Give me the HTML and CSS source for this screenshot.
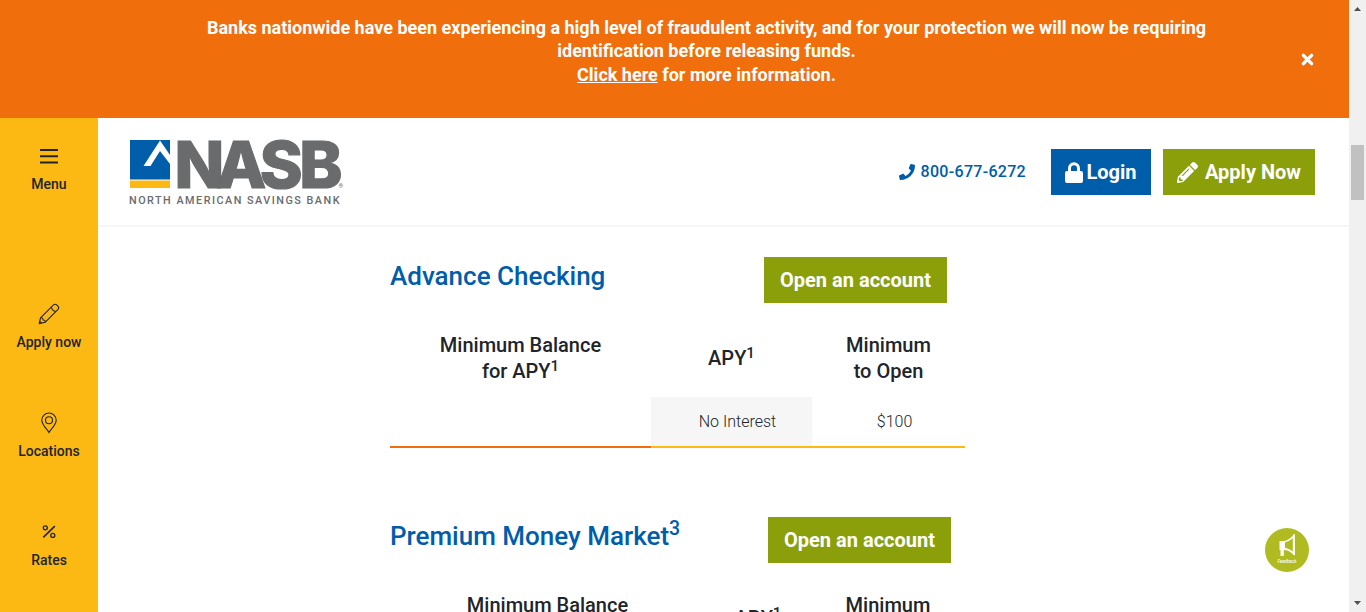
FILE: index.html
```html
<!DOCTYPE html>
<html lang="en">
<head>
<meta charset="utf-8">
<title>NASB Checking Accounts</title>
<link rel="stylesheet" href="styles.css">
</head>
<body>
<div class="viewport">
  <div class="page">
    <div class="alert">
      <p class="alert-text">Banks nationwide have been experiencing a high level of fraudulent activity, and for your protection we will now be requiring<br>identification before releasing funds.<br><a class="alert-link" href="#">Click here</a> for more information.</p>
      <svg class="alert-close" viewBox="0 0 12 12" aria-label="Close"><path d="M2.2 2.2 9.8 9.8M9.8 2.2 2.2 9.8" stroke="#fff" stroke-width="3.1" stroke-linecap="round"/></svg>
    </div>
    <div class="body">
      <nav class="side">
        <a class="side-item side-menu" href="#">
          <svg class="side-icon" viewBox="0 0 22 22"><path d="M2 5h18M2 11.2h18M2 17.4h18" stroke="#212529" stroke-width="2" fill="none"/></svg>
          <span>Menu</span>
        </a>
        <a class="side-item side-apply" href="#">
          <svg class="side-icon" viewBox="0 0 22 22"><g stroke="#212529" stroke-width="1.1" fill="none" stroke-linejoin="round"><path d="M1.2 20.6 2.5 14.8 15.5 1.9Q17.2.4 19 2.2L19.9 3.1Q21.5 4.8 20 6.4L7.1 19.3Z"/><path d="M2.6 14.8Q5 14.4 5 17Q7.600 16.800 7.100 19.200M13.400 4Q14 7.900 17.900 8.500M1.700 18.200 3.600 20.100"/></g></svg>
          <span>Apply now</span>
        </a>
        <a class="side-item side-locations" href="#">
          <svg class="side-icon" viewBox="0 0 22 22"><g stroke="#212529" stroke-width="1.1" fill="none"><path d="M11 20.600C9.500 17.500 3.800 12.900 3.800 8.200A7.200 7.200 0 0 1 18.200 8.200C18.200 12.900 12.500 17.500 11 20.600Z"/><circle cx="11" cy="8.200" r="3.500"/></g></svg>
          <span>Locations</span>
        </a>
        <a class="side-item side-rates" href="#">
          <svg class="side-icon" viewBox="0 0 22 22"><g stroke="#212529" stroke-width="1.300" fill="none"><circle cx="7.300" cy="6.800" r="2"/><circle cx="14.800" cy="14.400" r="2"/><path d="M5.300 16.400 16.800 5.100" stroke-width="1.600"/></g></svg>
          <span>Rates</span>
        </a>
      </nav>
      <main class="main">
        <header class="header">
          <svg class="logo" viewBox="0 0 216 70" role="img" aria-label="NASB North American Savings Bank">
            <rect x="1" y="2" width="40" height="39.500" fill="#005daa"/>
            <rect x="1" y="42.500" width="40" height="7.500" fill="#fdb913"/>
            <path d="M14.500 28 31 2.500 41 17V26L31 13 21.500 28Z" fill="#fff"/>
            <text class="logo-name" y="49.500" x="45.500 87.300 130.800 170.300">NASB</text>
            <text class="logo-reg" x="209.500" y="50">®</text>
            <text class="logo-tag" x="0" y="66" textLength="210.500">NORTH AMERICAN SAVINGS BANK</text>
          </svg>
          <div class="actions">
            <a class="phone" href="#"><svg class="phone-icon" viewBox="0 0 512 512"><path fill="#005daa" d="M493.400 24.600l-104-24c-11.300-2.600-22.900 3.300-27.500 13.900l-48 112c-4.200 9.800-1.400 21.300 6.900 28l60.600 49.600c-36 76.700-98.900 140.500-177.200 177.200l-49.600-60.600c-6.800-8.300-18.200-11.100-28-6.900l-112 48C3.900 366.500-2 378.100.6 389.400l24 104C27.100 504.200 36.700 512 48 512c256.100 0 464-207.500 464-464 0-11.200-7.700-20.900-18.600-23.400z"/></svg>800-677-6272</a>
            <a class="btn btn-login" href="#"><svg class="lock-icon" viewBox="0 0 18 21"><path d="M4.500 10V6.200A4.500 4.500 0 0 1 13.500 6.200V10" stroke="#fff" stroke-width="3" fill="none"/><rect y="9" width="18" height="12" rx="2" fill="#fff"/></svg>Login</a>
            <a class="btn btn-apply" href="#"><svg class="pen-icon" viewBox="0 0 512 512"><path fill="#fff" d="M497.900 142.100l-46.100 46.100c-4.700 4.700-12.300 4.700-17 0l-111-111c-4.700-4.700-4.700-12.300 0-17l46.100-46.100c18.700-18.700 49.100-18.700 67.900 0l60.100 60.100c18.800 18.700 18.800 49.100 0 67.900zM284.200 99.800L21.600 362.400.4 483.900c-2.900 16.400 11.400 30.600 27.800 27.800l121.500-21.300 262.600-262.600c4.700-4.700 4.700-12.300 0-17l-111-111c-4.800-4.700-12.400-4.700-17.100 0zM124.100 339.900c-5.500-5.500-5.500-14.300 0-19.800l154-154c5.500-5.500 14.300-5.500 19.800 0s5.500 14.300 0 19.800l-154 154c-5.500 5.500-14.300 5.500-19.800 0zM88 424h48v36.300l-64.500 11.300-31.100-31.100L51.700 376H88v48z"/></svg>Apply Now</a>
          </div>
        </header>
        <section class="product">
          <div class="product-head">
            <h2 class="product-title">Advance Checking</h2>
            <a class="btn btn-open" href="#">Open an account</a>
          </div>
          <table class="rates">
            <colgroup><col class="c-balance"><col class="c-apy"><col class="c-open"></colgroup>
            <tr><th>Minimum Balance<br>for APY<sup>1</sup></th><th>APY<sup>1</sup></th><th>Minimum<br>to Open</th></tr>
            <tr class="rate-row"><td class="tier"></td><td class="shade">No Interest</td><td>$100</td></tr>
          </table>
        </section>
        <section class="product">
          <div class="product-head product-head-market">
            <h2 class="product-title">Premium Money Market<sup>3</sup></h2>
            <a class="btn btn-open" href="#">Open an account</a>
          </div>
          <table class="rates">
            <colgroup><col class="m-balance"><col class="m-apy"><col class="m-open"></colgroup>
            <tr><th>Minimum Balance<br>for APY<sup>1</sup></th><th>APY<sup>1</sup></th><th>Minimum<br>to Open</th></tr>
          </table>
        </section>
      </main>
    </div>
  </div>
  <div class="scrollbar">
    <svg class="scroll-arrow" viewBox="0 0 7 4"><path d="M0 4 3.500 0 7 4Z" fill="#505050"/></svg>
    <div class="thumb"></div>
    <svg class="scroll-arrow scroll-down" viewBox="0 0 7 4"><path d="M0 0 3.500 4 7 0Z" fill="#505050"/></svg>
  </div>
  <a class="feedback" href="#">
    <svg class="feedback-icon" viewBox="0 0 44 44"><path d="M14.500 13H20V22H18.800V28H15.500V22H14.500Z" fill="#fff"/><path d="M19 13.800Q24 13 28.800 8V25.500Q24 21 19 21" fill="none" stroke="#fff" stroke-width="1.800"/><path d="M28.800 6.500V27" stroke="#fff" stroke-width="1.800"/><text class="feedback-label" x="22" y="35" text-anchor="middle" textLength="19">Feedback</text></svg>
  </a>
</div>
</body>
</html>
```
FILE: styles.css
```css
* { box-sizing: border-box; }
body { margin: 0; font-family: Roboto, "Liberation Sans", sans-serif; font-size: 16px; color: #212529; background: #fff; overflow: hidden; }
a { text-decoration: none; color: inherit; }
svg { display: block; flex: none; }
.viewport { display: grid; grid-template-columns: 1fr 17px; height: 612px; overflow: hidden; }
.page { display: flex; flex-direction: column; height: 612px; overflow: hidden; }

.alert { display: flex; align-items: center; flex: none; height: 118px; padding: 0 35px 0 112px; background: #f06e0c; color: #fff; }
.alert-text { flex: 1; margin: -16px 0 0; text-align: center; font-size: 18px; font-weight: 700; line-height: 23.4px; white-space: nowrap; }
.alert-link { text-decoration: underline; }
.alert-close { width: 13px; height: 13px; }

.body { display: flex; flex: 1; min-height: 0; }
.side { flex: none; width: 98px; padding-top: 27px; background: #fdb913; }
.side-item { display: flex; flex-direction: column; align-items: center; gap: 8px; height: 109px; font-size: 14px; font-weight: 500; line-height: 18px; }
.side-menu { height: 158px; }
.side-icon { width: 22px; height: 22px; }

.main { flex: 1; min-width: 0; }
.header { display: flex; justify-content: space-between; height: 109px; padding: 20px 34px 0 31px; border-bottom: 2px solid #f6f6f6; }
.logo { width: 216px; height: 70px; }
.logo-name { font-family: Inter, sans-serif; font-weight: 800; font-size: 65px; fill: #6a6b6d; stroke: #6a6b6d; stroke-width: 1.2px; }
.logo-reg { font-size: 6px; fill: #6a6b6d; }
.logo-tag { font-size: 10.800px; font-weight: 500; fill: #6a6b6d; }
.actions { display: flex; padding-top: 11px; }
.phone { display: flex; align-items: center; height: 45px; margin-right: 25px; gap: 6px; color: #005daa; font-weight: 500; letter-spacing: .3px; }
.phone-icon { width: 16px; height: 16px; }
.btn { display: flex; align-items: center; justify-content: center; height: 46px; color: #fff; background: #8a9f0a; font-size: 20px; font-weight: 700; white-space: nowrap; }
.btn-login { width: 100px; margin-right: 12px; gap: 3px; background: #005daa; }
.lock-icon { width: 18px; height: 21px; }
.btn-apply { width: 152px; gap: 7px; }
.pen-icon { width: 21px; height: 21px; }

.product { width: 575px; margin-left: 292px; padding-top: 30px; height: 260px; }
.product-head { display: flex; justify-content: space-between; padding-right: 18px; }
.product-head-market { padding-right: 14px; }
.product-title { margin: 3px 0 0; color: #005daa; font-size: 26px; font-weight: 500; line-height: 32px; }
.btn-open { width: 183px; }
sup { font-size: 75%; line-height: 0; position: relative; top: -.5em; vertical-align: baseline; }
.rates { width: 575px; margin-top: 21px; border-collapse: collapse; table-layout: fixed; }
.c-balance { width: 261px; }
.c-apy { width: 161px; }
.c-open { width: 153px; }
.m-balance { width: 315px; }
.m-apy { width: 106px; }
.m-open { width: 154px; }
th { height: 73px; padding: 0 0 5px; text-align: center; font-size: 20px; font-weight: 500; line-height: 26px; }
td { height: 50px; padding: 0 0 0 12px; text-align: center; font-weight: 300; border-bottom: 2px solid #fdb913; }
.tier { border-bottom-color: #f06e0c; }
.shade { background: #f6f6f6; }

.scrollbar { display: flex; flex-direction: column; align-items: center; background: #f0f0f0; padding: 7px 0; }
.scroll-arrow { width: 7px; height: 4px; }
.thumb { width: 13px; height: 55px; margin-top: 134px; background: #c1c1c1; }
.scroll-down { margin-top: auto; }

.feedback { position: absolute; left: 1265px; top: 528px; width: 44px; height: 44px; border-radius: 50%; background: #afbb20; }
.feedback-icon { width: 44px; height: 44px; }
.feedback-label { font-size: 5px; fill: #fff; }
```
